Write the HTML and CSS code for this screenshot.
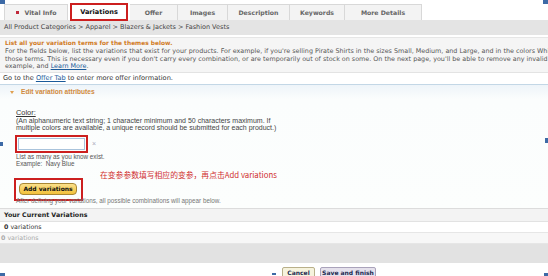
FILE: index.html
```html
<!DOCTYPE html>
<html>
<head>
<meta charset="utf-8">
<link rel="stylesheet" href="styles.css">
</head>
<body>
<div class="page">
  <div class="tabs">
    <div class="tab t1"><span class="bullet"></span>Vital Info</div>
    <div class="tab t2 active">Variations</div>
    <div class="tab t3">Offer</div>
    <div class="tab t4">Images</div>
    <div class="tab t5">Description</div>
    <div class="tab t6">Keywords</div>
    <div class="tab t7">More Details</div>
  </div>
  <div class="crumbs">All Product Categories &gt; Apparel &gt; Blazers &amp; Jackets &gt; Fashion Vests</div>
  <div class="intro">
    <div class="intro-title">List all your variation terms for the themes below.</div>
    <p class="intro-text">For the fields below, list the variations that exist for your products. For example, if you're selling Pirate Shirts in the sizes Small, Medium, and Large, and in the colors White and Black, enter<br>those terms. This is necessary even if you don't carry every combination, or are temporarily out of stock on some. On the next page, you'll be able to remove any invalid variations. See an<br>example, and <a href="#">Learn More</a>.</p>
  </div>
  <div class="goto">Go to the <a href="#">Offer Tab</a> to enter more offer information.</div>
  <div class="panel">
    <div class="panel-head"><span class="caret"></span>Edit variation attributes</div>
    <div class="panel-body">
      <div class="label">Color:</div>
      <div class="desc">(An alphanumeric text string; 1 character minimum and 50 characters maximum. If multiple colors are available, a unique record should be submitted for each product.)</div>
      <div class="input-row">
        <div class="input-box"><div class="input"></div></div>
        <span class="clear">×</span>
      </div>
      <div class="hint">List as many as you know exist.</div>
      <div class="hint">Example:&nbsp; Navy Blue</div>
      <div class="note">在变参参数填写相应的变参，再点击Add variations</div>
      <div class="btn-row">
        <div class="btn-box"><button class="add-btn">Add variations</button></div>
      </div>
      <div class="after">After defining your variations, all possible combinations will appear below.</div>
    </div>
  </div>
  <div class="current">
    <div class="cur-head">Your Current Variations</div>
    <div class="cur-row"><b>0</b> variations</div>
    <div class="cur-row dim"><b>0</b> variations</div>
    <div class="cur-foot"></div>
  </div>
  <div class="actions">
    <button class="cancel">Cancel</button>
    <button class="save">Save and finish</button>
  </div>
  <span class="mark m1"></span>
  <span class="mark m2"></span>
  <span class="mark m3"></span>
  <span class="mark m4"></span>
  <span class="mark m5"></span>
  <span class="mark m6"></span>
  <span class="mark m7"></span>
</div>
</body>
</html>
```
FILE: styles.css
```css
html, body {
  margin: 0;
  padding: 0;
  background: #fff;
}
.page {
  position: relative;
  width: 548px;
  height: 276px;
  overflow: hidden;
  font-family: "DejaVu Sans", Verdana, sans-serif;
  font-size: 6.5px;
  color: #333;
}
a {
  color: #1a5a9a;
  text-decoration: underline;
}
.tabs {
  display: flex;
  padding: 4px 0 0 4px;
  height: 16px;
}
.tab {
  display: flex;
  align-items: center;
  justify-content: center;
  height: 16px;
  box-sizing: border-box;
  background: #f3f3f3;
  border: 1px solid #d8d8d8;
  border-bottom: none;
  border-left: none;
  font-weight: bold;
  font-size: 6.2px;
  color: #666;
  white-space: nowrap;
}
.t1 { width: 64px; border-left: 1px solid #d8d8d8; }
.t2 { width: 58px; margin-left: 2px; }
.t3 { width: 48px; margin-left: 2px; }
.t4 { width: 50px; }
.t5 { width: 62px; }
.t6 { width: 55px; }
.t7 { width: 77px; }
.tab.active {
  background: #fff;
  color: #111;
  border: 2px solid #cc1f1f;
  height: 18px;
  margin-top: -1px;
  font-size: 6.6px;
}
.bullet {
  display: inline-block;
  width: 3px;
  height: 3px;
  background: #c0283a;
  margin-right: 6px;
}
.crumbs {
  background: #e4e4e4;
  height: 15px;
  line-height: 15px;
  padding-left: 4px;
  color: #444;
  white-space: nowrap;
}
.intro {
  margin-top: 2px;
  background: #f5f5f5;
  border-top: 1px solid #e6e6e6;
  border-bottom: 1px solid #e3e3e3;
  padding: 1px 0 0 5px;
  height: 36px;
  box-sizing: border-box;
}
.intro-title {
  color: #d07a1e;
  font-weight: bold;
  font-size: 5.9px;
  line-height: 8px;
  white-space: nowrap;
}
.intro-text {
  margin: 1px 0 0;
  font-size: 6.4px;
  line-height: 7.6px;
  color: #555;
  white-space: nowrap;
}
.goto {
  padding: 1px 0 0 3px;
  height: 8px;
  line-height: 8px;
  font-size: 6.6px;
  color: #333;
  white-space: nowrap;
}
.panel {
  margin-top: 2px;
  border-top: 1px solid #c3d7e6;
  border-bottom: 1px solid #dcdcdc;
  background: linear-gradient(#eef4f9, #fbfdfd 14px, #fcfefd);
  height: 125px;
  box-sizing: border-box;
}
.panel-head {
  display: flex;
  align-items: center;
  color: #d08a40;
  font-family: "Liberation Sans", Arial, sans-serif;
  font-weight: bold;
  font-size: 6.6px;
  padding: 3px 0 0 10px;
  height: 8px;
  line-height: 8px;
}
.caret {
  display: inline-block;
  width: 0;
  height: 0;
  border-left: 2px solid transparent;
  border-right: 2px solid transparent;
  border-top: 3px solid #e0a050;
  margin-right: 7px;
}
.panel-body {
  padding: 13px 0 0 16px;
  font-family: "Liberation Sans", Arial, sans-serif;
  font-size: 6.3px;
  color: #444;
}
.label {
  font-size: 7.4px;
  text-decoration: underline;
  color: #333;
  line-height: 8px;
}
.desc {
  width: 262px;
  font-size: 7px;
  line-height: 7.4px;
  color: #444;
}
.input-row {
  display: flex;
  align-items: center;
  margin-top: 3px;
  height: 18px;
}
.input-box {
  width: 73px;
  height: 18px;
  box-sizing: border-box;
  border: 2px solid #cc1f1f;
  margin-left: -1px;
  padding: 1px;
}
.input {
  height: 100%;
  border: 1px solid #a9c3dc;
  background: #fff;
  box-sizing: border-box;
}
.clear {
  color: #aab;
  font-size: 7px;
  line-height: 8px;
  margin-left: 4px;
}
.hint {
  line-height: 7.6px;
  color: #555;
  white-space: nowrap;
}
.note {
  font-family: "Noto Sans CJK SC", sans-serif;
  color: #d03030;
  font-size: 7.8px;
  line-height: 10px;
  height: 10px;
  margin: 2px 0 0 84px;
  white-space: nowrap;
}
.btn-row {
  display: flex;
  margin-top: -2px;
}
.btn-box {
  display: flex;
  border: 2px solid #cc1f1f;
  padding: 3px 4px 4px 3px;
  margin-left: -2px;
}
.add-btn {
  display: block;
  width: 58px;
  height: 12px;
  padding: 0;
  border: 1px solid #a88734;
  border-radius: 4px;
  background: linear-gradient(#fbe08a, #f2c13a);
  font-family: "DejaVu Sans", Verdana, sans-serif;
  font-weight: bold;
  font-size: 6px;
  line-height: 10px;
  color: #111;
  white-space: nowrap;
}
.after {
  margin-top: -4px;
  color: #777;
  line-height: 7px;
  white-space: nowrap;
}
.current {
  font-family: "DejaVu Sans", Verdana, sans-serif;
  font-size: 6.3px;
}
.cur-head {
  background: #f3f3f3;
  border-bottom: 1px solid #e2e2e2;
  height: 12px;
  line-height: 12px;
  font-weight: bold;
  color: #222;
  padding-left: 4px;
}
.cur-row {
  height: 10px;
  line-height: 10px;
  padding-left: 4px;
  background: #fff;
  border-bottom: 1px solid #e6e6e6;
  color: #333;
}
.cur-row.dim {
  background: #f7f7f7;
  color: #aaa;
  padding-left: 1px;
}
.cur-foot {
  height: 19px;
  background: #e2e2e2;
}
.actions {
  display: flex;
  gap: 5px;
  padding: 4px 0 0 282px;
}
.actions button {
  height: 12px;
  padding: 0;
  font-family: "DejaVu Sans", Verdana, sans-serif;
  font-weight: bold;
  font-size: 6px;
  line-height: 10px;
  color: #1b2a50;
  border-radius: 2px;
  white-space: nowrap;
}
.cancel {
  width: 33px;
  background: #f6f3dd;
  border: 1px solid #b9b08a;
}
.save {
  width: 56px;
  background: #e5e1ec;
  border: 1px solid #aaa3bb;
}
.mark {
  position: absolute;
  background: #3d6aa6;
}
.m1 { left: 0; top: 0; width: 5px; height: 4px; }
.m2 { left: 543px; top: 0; width: 5px; height: 4px; }
.m3 { left: 0; top: 142px; width: 3px; height: 4px; }
.m4 { left: 545px; top: 138px; width: 3px; height: 5px; }
.m5 { left: 0; top: 273px; width: 5px; height: 3px; }
.m6 { left: 272px; top: 273px; width: 4px; height: 2px; }
.m7 { left: 544px; top: 273px; width: 4px; height: 3px; }
```
